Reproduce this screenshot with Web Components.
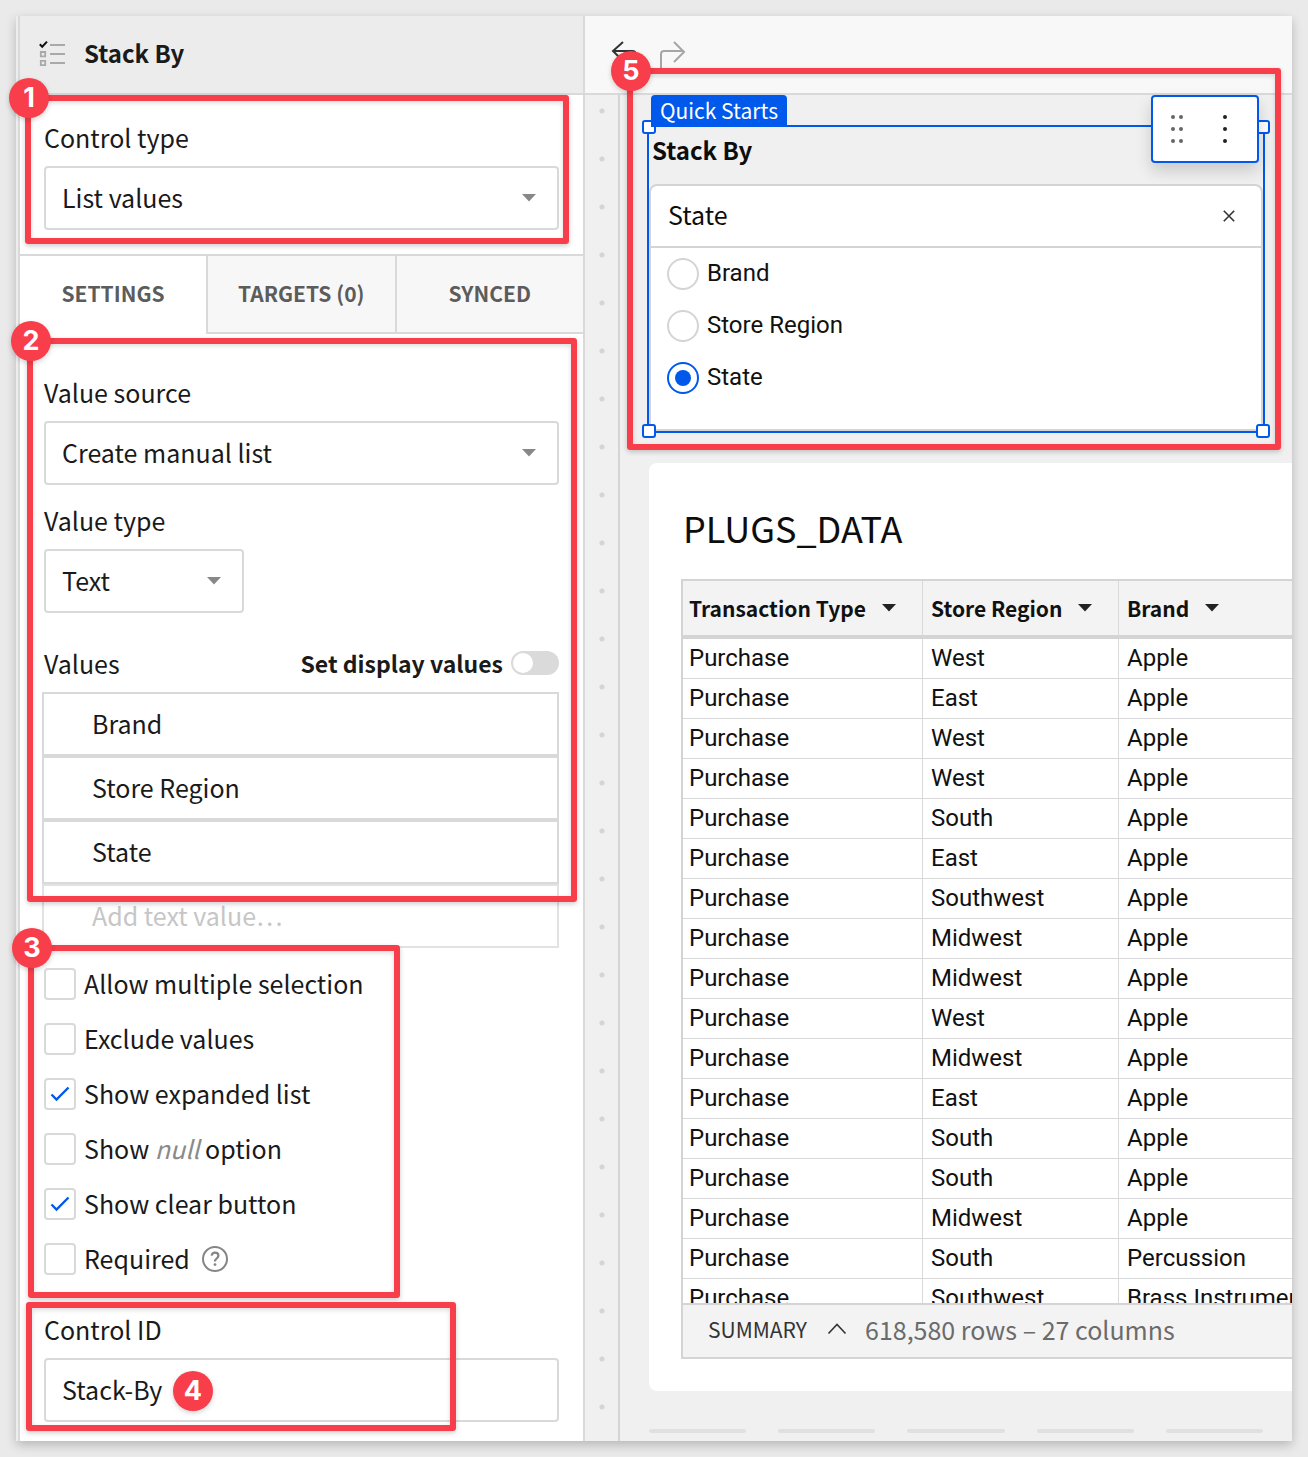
<!DOCTYPE html>
<html lang="en">
<head>
<meta charset="utf-8">
<title>Stack By</title>
<style>
  :root {
    --ui: "Noto Sans CJK KR", "Noto Sans", sans-serif;
    --data: Roboto, "Liberation Sans", sans-serif;
    --line: #d9d9d9;
    --ink: #1a1a1a;
    --blue: #0059eb;
    --red: #f73e4a;
  }
  body {
    margin: 0;
    padding: 16px;
    background: #eaeaea;
    color: var(--ink);
    font: 400 25px/34px var(--ui);
  }
</style>
</head>
<body>
<app-frame>
  <side-panel slot="side" heading="Stack By"></side-panel>
  <work-area></work-area>
</app-frame>

<script>
const define = (name, html, setup) => {
  const template = document.createElement('template');
  template.innerHTML = '<style>*{box-sizing:border-box}[hidden]{display:none!important}</style>' + html;
  customElements.define(name, class extends HTMLElement {
    constructor() {
      super();
      this.attachShadow({ mode: 'open' }).append(template.content.cloneNode(true));
    }
    connectedCallback() {
      if (setup && !this.ready) { this.ready = true; setup(this, this.shadowRoot); }
    }
  });
};

define('app-frame', `
  <style>
    :host { display: flex; background: #f0f0f0; box-shadow: 0 4px 10px rgba(0,0,0,.22); }
    ::slotted(*) { flex: 1; min-width: 0; }
    ::slotted([slot=side]) { flex: 0 0 569px; }
  </style>
  <slot name="side"></slot><slot></slot>`);

/* Numbered annotation: an optional outline plus a round badge. */
define('call-out', `
  <style>
    :host { position: absolute; z-index: 10; box-sizing: border-box; pointer-events: none; border: 6px solid var(--red);
            border-radius: 3px; box-shadow: 0 2px 5px rgba(0,0,0,.2), inset 0 2px 5px rgba(0,0,0,.14); }
    :host([plain]) { border: 0; box-shadow: none; width: 40px; height: 40px; }
    .badge { position: absolute; left: -22px; top: -23px; width: 40px; height: 40px; border-radius: 50%;
             background: var(--red); color: #fff; display: flex; align-items: center; justify-content: center;
             font: 700 27px/40px Inter, "Liberation Sans", sans-serif; box-shadow: 0 2px 5px rgba(0,0,0,.18); }
    :host([plain]) .badge { left: 0; top: 0; }
  </style>
  <span class="badge"><slot></slot></span>`);

define('select-field', `
  <style>
    :host { display: block; }
    label { display: block; margin-bottom: 12px; }
    .box { position: relative; }
    select { appearance: none; display: block; width: 100%; height: 64px; margin: 0; padding: 0 44px 2px 16px;
             border: 2px solid var(--line); border-radius: 4px; background: #fff; color: inherit; font: inherit; }
    svg { position: absolute; right: 23px; top: 28px; pointer-events: none; }
  </style>
  <label for="s"><slot></slot></label>
  <div class="box">
    <select id="s"><option></option></select>
    <svg width="14" height="8"><path d="M0 0H14L7 7.5Z" fill="#888"/></svg>
  </div>`, (el, root) => { root.querySelector('option').textContent = el.getAttribute('value'); });

define('text-field', `
  <style>
    :host { display: block; }
    label { display: block; margin-bottom: 12px; }
    input { display: block; width: 100%; height: 64px; padding: 0 16px 2px; border: 2px solid var(--line);
            border-radius: 4px; background: #fff; color: inherit; font: inherit; }
  </style>
  <label for="t"><slot></slot></label>
  <input id="t" type="text">`, (el, root) => { root.querySelector('input').value = el.getAttribute('value'); });

define('value-row', `
  <style>
    :host { display: block; }
    input { display: block; width: 100%; height: 64px; padding: 0 48px 2px; border: 2px solid var(--line);
            border-radius: 0; background: #fff; color: inherit; font: inherit; }
    :host([placeholder]) input { border-color: #e2e2e2; }
    input::placeholder { color: #c6c6c6; opacity: 1; }
  </style>
  <input type="text" aria-label="Value">`, (el, root) => {
    const input = root.querySelector('input');
    input.value = el.getAttribute('value') || '';
    input.placeholder = el.getAttribute('placeholder') || '';
  });

define('toggle-switch', `
  <style>
    :host { display: flex; align-items: center; gap: 8px; font-weight: 700; font-size: 23px; }
    input { appearance: none; width: 48px; height: 24px; margin: 0; padding: 2px; border-radius: 12px; background: #dadada; display: flex; }
    input::before { content: ""; width: 20px; height: 20px; border-radius: 50%; background: #fff; }
    input:checked { background: var(--blue); justify-content: flex-end; }
  </style>
  <label for="w"><slot></slot></label><input id="w" type="checkbox" role="switch">`);

define('check-item', `
  <style>
    :host { display: flex; align-items: center; height: 55px; gap: 12px; }
    label { display: flex; align-items: center; gap: 8px; }
    .text { padding-bottom: 2px; }
    .box { display: grid; }
    .box > * { grid-area: 1 / 1; }
    input { appearance: none; width: 32px; height: 32px; margin: 0; border: 2px solid var(--line); border-radius: 4px; background: #fff; }
    svg { display: none; pointer-events: none; }
    input:checked + svg { display: block; }
  </style>
  <label><span class="box"><input type="checkbox"><svg width="32" height="32" fill="none" stroke="#0059eb" stroke-width="2.4"><path d="M7.5 16.5L12.5 21.5L24.5 9.5"/></svg></span><span class="text"><slot></slot></span></label>
  <slot name="help"></slot>`, (el, root) => { root.querySelector('input').checked = el.hasAttribute('checked'); });

define('help-button', `
  <style>
    :host { display: block; }
    button { display: block; width: 26px; height: 26px; padding: 0; border: 2px solid #858585; border-radius: 50%; background: none; }
    svg { display: block; }
  </style>
  <button type="button" aria-label="Help"><svg width="22" height="22" fill="none" stroke="#858585" stroke-width="2.2"><path d="M7.6 7.6C8 5.6 9.4 4.7 11 4.7C13 4.7 14.4 5.9 14.4 7.7C14.4 10.3 11 10.3 11 13.6"/><circle cx="11" cy="16.6" r="1.4" fill="#858585" stroke="none"/></svg></button>`);

define('side-panel', `
  <style>
    :host { display: flex; flex-direction: column; box-sizing: border-box; background: #fff; border-left: 2px solid #ededed; }
    .panel { flex: 1; border: solid var(--line); border-width: 0 2px; }
    header { display: flex; align-items: center; gap: 18px; height: 79px; padding: 0 18px 4px; background: #ececec; border-bottom: 2px solid var(--line); }
    h1 { margin: 0; font-size: 24px; line-height: 34px; font-weight: 700; }
    section { position: relative; padding: 0 24px; }
    .type { padding-top: 25px; padding-bottom: 24px; }
    nav { display: grid; grid-template-columns: 186px 1fr 1fr; border-top: 2px solid var(--line); }
    nav button { height: 78px; padding: 0 0 2px; border: solid var(--line); border-width: 0 0 2px 2px; background: #f7f7f7; color: #5c5c5c; font: 700 21px/32px var(--ui); }
    nav button.on { background: #fff; border-color: transparent; border-left: 0; }
    .source { display: grid; padding-top: 41px; }
    .source select-field { margin-bottom: 18px; }
    .source .short { width: 200px; margin-bottom: 33px; }
    .row { display: flex; justify-content: space-between; margin-bottom: 12px; }
    .list { margin-left: -2px; }
    .checks { padding-top: 8px; padding-bottom: 26px; }
    .id { padding-bottom: 19px; }
    i { color: #8a8a8a; }
    .c1 { left: 5px; top: 0; right: 14px; bottom: 10px; }
    .c2 { left: 7px; top: 4px; right: 6px; bottom: 46px; }
    .c3 { left: 8px; top: -3px; width: 372px; bottom: 14px; }
    .c4 { left: 6px; top: -10px; width: 430px; bottom: 10px; }
    .c4 + call-out { left: 153px; top: 59px; }
  </style>
  <div class="panel">
    <header>
      <svg width="28" height="28" fill="none" stroke="#a9a9a9" stroke-width="2"><path d="M12 6H27M12 15H27M12 24H27"/><path d="M2.8 13H7.2V17.4H2.8ZM2.8 21.8H7.2V26.2H2.8Z" stroke-width="1.8"/><path d="M1.8 5.3L4.2 7.8L9 2.6" stroke="#111"/></svg>
      <h1></h1>
    </header>
    <section class="type">
      <select-field value="List values">Control type</select-field>
      <call-out class="c1">1</call-out>
    </section>
    <nav>
      <button type="button" class="on">SETTINGS</button>
      <button type="button">TARGETS (0)</button>
      <button type="button">SYNCED</button>
    </nav>
    <section class="source">
      <select-field value="Create manual list">Value source</select-field>
      <select-field class="short" value="Text">Value type</select-field>
      <div class="row"><span>Values</span><toggle-switch>Set display values</toggle-switch></div>
      <div class="list">
        <value-row value="Brand"></value-row>
        <value-row value="Store Region"></value-row>
        <value-row value="State"></value-row>
        <value-row placeholder="Add text value…"></value-row>
      </div>
      <call-out class="c2">2</call-out>
    </section>
    <section class="checks">
      <check-item>Allow multiple selection</check-item>
      <check-item>Exclude values</check-item>
      <check-item checked>Show expanded list</check-item>
      <check-item>Show <i>null</i> option</check-item>
      <check-item checked>Show clear button</check-item>
      <check-item>Required<help-button slot="help"></help-button></check-item>
      <call-out class="c3">3</call-out>
    </section>
    <section class="id">
      <text-field value="Stack-By">Control ID</text-field>
      <call-out class="c4"></call-out>
      <call-out plain>4</call-out>
    </section>
  </div>`, (el, root) => {
    root.querySelector('h1').textContent = el.getAttribute('heading');
    root.querySelector('.c4').shadowRoot.querySelector('.badge').hidden = true;
  });

define('radio-list', `
  <style>
    :host { display: block; padding-bottom: 25px; font: 400 24px/32px var(--data); color: #111; }
    label { display: flex; align-items: center; gap: 8px; height: 52px; padding-left: 16px; }
    span { padding-bottom: 2px; }
    input { appearance: none; display: grid; place-items: center; width: 32px; height: 32px; margin: 0; border: 2px solid #d4d4d4; border-radius: 50%; background: #fff; }
    input:checked { border-color: var(--blue); }
    input:checked::before { content: ""; width: 16px; height: 16px; border-radius: 50%; background: var(--blue); }
  </style>
  <label><input type="radio" name="stack"><span>Brand</span></label>
  <label><input type="radio" name="stack"><span>Store Region</span></label>
  <label><input type="radio" name="stack" checked><span>State</span></label>`);

define('stack-control', `
  <style>
    :host { display: block; position: relative; border: 2px solid var(--blue); color: #0d0d0d; }
    h2 { margin: 0; padding: 6px 3px 17px; font-size: 24px; line-height: 34px; font-weight: 700; }
    .box { background: #fff; border: 2px solid #d4d4d4; border-radius: 8px 8px 0 0; }
    .current { display: flex; align-items: center; justify-content: space-between; height: 62px; padding: 0 22px 0 17px; border-bottom: 2px solid #d4d4d4; }
    .current span { padding-bottom: 4px; }
    button { padding: 0; border: 0; background: none; display: grid; place-items: center; }
    .clear { width: 20px; height: 20px; }
    .tag { position: absolute; left: 2px; top: -32px; padding: 0 9px 2px; border-radius: 4px 4px 0 0; background: var(--blue); color: #fff; font-size: 21px; line-height: 30px; }
    .menu { position: absolute; right: 4px; top: -32px; display: flex; width: 108px; height: 68px; background: #fff; border: 2px solid var(--blue); border-radius: 4px; box-shadow: 0 8px 16px rgba(0,0,0,.16); }
    .menu button { width: 48px; }
    .grip { position: absolute; width: 14px; height: 14px; border: 2px solid var(--blue); border-radius: 3px; background: #fff; }
    .l { left: -7px } .r { right: -7px } .t { top: -7px } .b { bottom: -7px }
    call-out { left: -22px; top: -59px; right: -18px; bottom: -19px; }
  </style>
  <h2>Stack By</h2>
  <div class="box">
    <div class="current"><span>State</span><button class="clear" type="button" aria-label="Clear"><svg width="12" height="12" stroke="#333" stroke-width="1.6"><path d="M.8 .8L11.2 11.2M11.2 .8L.8 11.2"/></svg></button></div>
    <radio-list></radio-list>
  </div>
  <i class="grip l t"></i><i class="grip r t"></i><i class="grip l b"></i><i class="grip r b"></i>
  <span class="tag">Quick Starts</span>
  <div class="menu">
    <button type="button" aria-label="Move"><svg width="14" height="30" fill="#666"><circle cx="3" cy="3" r="2"/><circle cx="11" cy="3" r="2"/><circle cx="3" cy="15" r="2"/><circle cx="11" cy="15" r="2"/><circle cx="3" cy="27" r="2"/><circle cx="11" cy="27" r="2"/></svg></button>
    <button type="button" aria-label="More"><svg width="6" height="30" fill="#222"><circle cx="3" cy="3" r="2"/><circle cx="3" cy="15" r="2"/><circle cx="3" cy="27" r="2"/></svg></button>
  </div>
  <call-out>5</call-out>`);

define('data-table', `
  <style>
    :host { display: block; border: 2px solid #d4d4d4; border-right: 0; color: #111; }
    .view { height: 722px; overflow: hidden; }
    table { width: 100%; table-layout: fixed; border-collapse: separate; border-spacing: 0; font: 400 24px/36px var(--data); }
    .a { width: 240px } .b { width: 196px }
    th, td { padding: 0 8px; text-align: left; white-space: nowrap; border-right: 1px solid #d9d9d9; }
    th:first-child, td:first-child { padding-left: 6px; }
    th:last-child, td:last-child { border-right: 0; }
    td { height: 40px; padding-bottom: 2px; border-bottom: 1px solid #d9d9d9; }
    th { height: 58px; background: #f3f3f3; border-bottom: 4px solid #d4d4d4; font: 700 21px/32px var(--ui); }
    th button { display: flex; align-items: center; gap: 16px; padding: 0; border: 0; background: none; color: inherit; font: inherit; }
    footer { display: flex; align-items: center; height: 54px; gap: 18px; padding: 0 25px 4px; background: #f3f3f3; border-top: 2px solid #d4d4d4; color: #6b6b6b; }
    footer button { display: flex; align-items: center; gap: 20px; padding: 0; border: 0; background: none; color: #333; font: 400 21px/32px var(--ui); }
  </style>
  <div class="view"><table>
    <colgroup><col class="a"><col class="b"><col></colgroup>
    <thead><tr></tr></thead><tbody></tbody>
  </table></div>
  <footer><button type="button">SUMMARY<svg width="20" height="12" fill="none" stroke="#333" stroke-width="1.6"><path d="M1.5 10.5L10 1.5L18.5 10.5"/></svg></button><span>618,580 rows – 27 columns</span></footer>`, (el, root) => {
    root.querySelector('thead tr').innerHTML = ['Transaction Type', 'Store Region', 'Brand'].map(name =>
      `<th scope="col"><button type="button">${name}<svg width="14" height="8"><path d="M0 0H14L7 7.5Z" fill="#222"/></svg></button></th>`).join('');
    const regions = 'West East West West South East Southwest Midwest Midwest West Midwest East South South Midwest South Southwest'.split(' ');
    const brands = { 15: 'Percussion', 16: 'Brass Instruments' };
    root.querySelector('tbody').innerHTML = regions.map((region, i) =>
      `<tr><td>Purchase</td><td>${region}</td><td>${brands[i] || 'Apple'}</td></tr>`).join('');
  });

define('work-area', `
  <style>
    :host { display: flex; flex-direction: column; }
    .bar { display: flex; align-items: center; gap: 21px; height: 79px; padding: 0 26px 1px; background: #f8f8f8; border-bottom: 2px solid var(--line); }
    .bar button { display: block; padding: 0; border: 0; background: none; }
    .bar svg { display: block; }
    .stage { flex: 1; display: flex; }
    .gutter { box-sizing: border-box; width: 35px; border-right: 2px solid #d4d4d4; background: radial-gradient(circle at 17px 16px, #d4d4d4 2px, transparent 3px) 0 0 / 33px 48px; }
    .canvas { flex: 1; min-width: 0; display: flex; flex-direction: column; padding: 30px 0 8px 29px; }
    stack-control { margin: 0 27px 30px -2px; }
    .card { background: #fff; border-radius: 8px 0 0 8px; padding: 38px 0 32px 32px; }
    h2 { margin: 0 0 26px; padding-left: 2px; font-size: 36px; line-height: 52px; font-weight: 400; color: #0d0d0d; }
    .ticks { display: flex; gap: 32px; margin: 38px 29px 0 0; }
    .ticks i { flex: 1; height: 4px; border-radius: 2px; background: #e0e0e0; }
  </style>
  <div class="bar">
    <button type="button" aria-label="Undo"><svg width="28" height="28" fill="none" stroke="#333" stroke-width="2"><path d="M12 2L2 11L12 21M2 11H21Q25 11 25 15V27"/></svg></button>
    <button type="button" aria-label="Redo"><svg width="28" height="28" fill="none" stroke="#a6a6a6" stroke-width="2"><path d="M14 2L24 12L14 22M24 11H4Q1 11 1 14V28"/></svg></button>
  </div>
  <div class="stage">
    <div class="gutter"></div>
    <div class="canvas">
      <stack-control></stack-control>
      <div class="card"><h2>PLUGS_DATA</h2><data-table></data-table></div>
      <div class="ticks"><i></i><i></i><i></i><i></i><i></i></div>
    </div>
  </div>`);
</script>
</body>
</html>
